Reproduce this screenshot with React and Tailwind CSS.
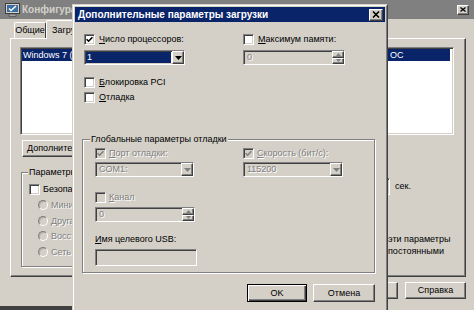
import React from "react";

const sunken =
  "border border-t-[#808080] border-l-[#808080] border-r-white border-b-white shadow-[inset_1px_1px_0_#404040,inset_-1px_-1px_0_#d4d0c8]";
const raised =
  "border border-t-white border-l-white border-r-[#404040] border-b-[#404040] shadow-[inset_-1px_-1px_0_#808080] bg-[#d4d0c8]";
const dis = "text-[#808080] [text-shadow:1px_1px_0_#fff]";

function Check({ checked, disabled }) {
  return (
    <div
      className={`w-[11px] h-[11px] shrink-0 flex items-center justify-center ${sunken} ${
        disabled ? "bg-[#d4d0c8]" : "bg-white"
      }`}
    >
      {checked && (
        <svg width="7" height="7" viewBox="0 0 7 7">
          <path
            d="M0.6 3.2 L2.6 5.2 L6.4 1.2"
            stroke={disabled ? "#808080" : "#000"}
            strokeWidth="1.6"
            fill="none"
          />
        </svg>
      )}
    </div>
  );
}

function Radio() {
  return (
    <div className="w-[10px] h-[10px] shrink-0 rounded-full border border-t-[#808080] border-l-[#808080] border-r-white border-b-white bg-[#d4d0c8] shadow-[inset_1px_1px_0_#b0aca4]" />
  );
}

function Arrow({ disabled }) {
  return (
    <div className={`w-[12px] h-full shrink-0 flex items-center justify-center ${raised}`}>
      <svg width="7" height="4" viewBox="0 0 7 4">
        <polygon points="0,0 7,0 3.5,4" fill={disabled ? "#808080" : "#000"} />
      </svg>
    </div>
  );
}

function Spin() {
  return (
    <div className="w-[12px] h-full shrink-0 flex flex-col">
      <div className={`flex-1 flex items-center justify-center ${raised}`}>
        <svg width="5" height="3" viewBox="0 0 5 3">
          <polygon points="2.5,0 5,3 0,3" fill="#808080" />
        </svg>
      </div>
      <div className={`flex-1 flex items-center justify-center ${raised}`}>
        <svg width="5" height="3" viewBox="0 0 5 3">
          <polygon points="0,0 5,0 2.5,3" fill="#808080" />
        </svg>
      </div>
    </div>
  );
}

function CloseGlyph() {
  return (
    <svg width="8" height="7" viewBox="0 0 8 7">
      <path d="M1 0.5 L7 6.5 M7 0.5 L1 6.5" stroke="#000" strokeWidth="1.6" fill="none" />
    </svg>
  );
}

export default function App() {
  return (
    <div className="relative w-[474px] h-[310px] overflow-hidden bg-[#d4d0c8] font-['Liberation_Sans',Arial,sans-serif] text-[9px] leading-[11px] text-black">
      {/* Background window: Конфигурация системы */}
      <div className="absolute left-0 top-0 z-0 w-[474px] h-[310px] bg-[#d4d0c8] flex flex-col">
        <div className="h-[19px] shrink-0 bg-[#808080] flex items-center pl-[5px] pr-[5px]">
          <svg width="15" height="14" viewBox="0 0 15 14">
            <rect x="0.5" y="0.5" width="14" height="10" fill="#d4d0c8" stroke="#404040" />
            <rect x="2" y="2" width="11" height="7" fill="#3a6ea5" />
            <path d="M4 5.5 L6 7.5 L11 3" stroke="#fff" strokeWidth="1.4" fill="none" />
            <rect x="4" y="11" width="7" height="2.5" fill="#a0a0a0" stroke="#404040" strokeWidth="0.6" />
          </svg>
          <span className="ml-[2px] font-bold text-[10px] text-[#d4d0c8]">Конфигурация системы</span>
          <div className={`ml-auto w-[12px] h-[10px] flex items-center justify-center ${raised}`}>
            <svg width="6" height="5" viewBox="0 0 6 5">
              <path d="M0.5 0.5 L5.5 4.5 M5.5 0.5 L0.5 4.5" stroke="#000" strokeWidth="1.3" fill="none" />
            </svg>
          </div>
        </div>

        {/* tabs */}
        <div className="h-[19px] shrink-0 flex items-end pl-[14px]">
          <div className="w-[32px] h-[16px] border border-b-0 border-t-white border-l-white border-r-[#404040] rounded-t-[2px] flex items-center justify-center">
            Общие
          </div>
          <div className="relative -mb-px w-[62px] h-[19px] border border-b-0 border-t-white border-l-white border-r-[#404040] rounded-t-[2px] bg-[#d4d0c8] flex items-center pl-[5px]">
            Загрузка
          </div>
        </div>

        {/* tab panel */}
        <div className="ml-[10px] w-[456px] h-[239px] shrink-0 border border-t-white border-l-white border-r-[#404040] border-b-[#404040] shadow-[inset_-1px_-1px_0_#808080] flex flex-col pl-[9px] pt-[8px]">
          <div className={`w-[434px] h-[88px] bg-white pt-px pl-px ${sunken}`}>
            <div className="h-[12px] w-[428px] bg-[#0a246a] text-white flex items-center pl-px whitespace-nowrap">
              <span className="w-[367px] overflow-hidden">Windows 7 (C:\Windows) : Текущая ОС; Загружаемая по умолчанию</span>
              <span>ОС</span>
            </div>
          </div>

          <div className={`mt-[5px] ml-[2px] w-[150px] h-[17px] flex items-center pl-[4px] ${raised}`}>
            Дополнительные параметры...
          </div>

          <div className="mt-[15px] flex">
            {/* Параметры загрузки group */}
            <div className="relative ml-[1px] w-[320px] h-[95px] border border-[#808080] shadow-[inset_1px_1px_0_#fff,1px_1px_0_#fff] flex flex-col pl-[7px] pt-[11px]">
              <span className="absolute left-[6px] top-[-6px] px-px bg-[#d4d0c8]">Параметры загрузки</span>
              <div className="flex items-center gap-[3px] h-[11px]">
                <Check />
                <span>Безопасный режим</span>
              </div>
              <div className="mt-[5px] ml-[9px] flex items-center gap-[3px] h-[10px]">
                <Radio />
                <span className={dis}>Минимальная</span>
              </div>
              <div className="mt-[6px] ml-[9px] flex items-center gap-[3px] h-[10px]">
                <Radio />
                <span className={dis}>Другая оболочка</span>
              </div>
              <div className="mt-[5px] ml-[9px] flex items-center gap-[3px] h-[10px]">
                <Radio />
                <span className={dis}>Восстановление Active Directory</span>
              </div>
              <div className="mt-[6px] ml-[9px] flex items-center gap-[3px] h-[10px]">
                <Radio />
                <span className={dis}>Сеть</span>
              </div>
            </div>

            {/* right column */}
            <div className="ml-[9px] flex flex-col pt-[6px]">
              <div className="flex items-center h-[17px]">
                <div className={`w-[40px] h-[17px] bg-white ${sunken}`} />
                <span className="ml-[5px]">сек.</span>
              </div>
              <div className="mt-[38px] ml-[38px] flex flex-col leading-[12px]">
                <span>эти параметры</span>
                <span>постоянными</span>
              </div>
            </div>
          </div>
        </div>

        {/* bottom buttons */}
        <div className="mt-[5px] flex justify-end pr-[8px] gap-[7px]">
          <div className={`w-[68px] h-[17px] flex items-center justify-center ${raised}`}>
            <span className={dis}>Применить</span>
          </div>
          <div className={`w-[61px] h-[17px] flex items-center justify-center ${raised}`}>
            Справка
          </div>
        </div>
        <div className="mt-auto w-[72px] h-[4px] bg-[#404040]" />
      </div>

      {/* Front dialog */}
      <div className="absolute left-[72px] top-[4px] z-20 w-[316px] h-[320px] bg-[#d4d0c8] border border-t-[#d4d0c8] border-l-[#d4d0c8] border-r-[#404040] border-b-[#404040]">
        <div className="h-full border border-t-white border-l-white border-r-[#808080] border-b-[#808080] p-px flex flex-col">
          <div className="h-[15px] shrink-0 bg-[#0a246a] flex items-center pl-[3px] pr-[2px]">
            <span className="text-white font-bold text-[10px]">Дополнительные параметры загрузки</span>
            <div className={`ml-auto w-[14px] h-[12px] flex items-center justify-center ${raised}`}>
              <CloseGlyph />
            </div>
          </div>

          <div className="flex flex-col pl-[7px] pt-[12px]">
            {/* row A */}
            <div className="ml-[2px] flex items-center h-[11px]">
              <div className="w-[159px] flex items-center gap-[4px]">
                <Check checked />
                <span>
                  <u>Ч</u>исло процессоров:
                </span>
              </div>
              <div className="flex items-center gap-[4px]">
                <Check />
                <span>
                  <u>М</u>аксимум памяти:
                </span>
              </div>
            </div>

            {/* row B */}
            <div className="ml-[2px] mt-[5px] flex h-[15px]">
              <div className={`w-[101px] h-[15px] bg-white flex ${sunken}`}>
                <div className="flex-1 m-px bg-[#0a246a] text-white flex items-center pl-[1px] leading-[9px]">1</div>
                <Arrow />
              </div>
              <div className={`ml-[58px] w-[102px] h-[15px] bg-[#d4d0c8] flex ${sunken}`}>
                <div className={`flex-1 flex items-center pl-[3px] leading-[11px] ${dis}`}>0</div>
                <Spin />
              </div>
            </div>

            {/* row C */}
            <div className="ml-[2px] mt-[12px] flex items-center gap-[4px] h-[11px]">
              <Check />
              <span>
                <u>Б</u>локировка PCI
              </span>
            </div>
            {/* row D */}
            <div className="ml-[2px] mt-[4px] flex items-center gap-[4px] h-[11px]">
              <Check />
              <span>
                <u>О</u>тладка
              </span>
            </div>

            {/* Global debug group */}
            <div className="relative mt-[36px] w-[293px] h-[134px] border border-[#808080] shadow-[inset_1px_1px_0_#fff,1px_1px_0_#fff] flex flex-col pl-[12px] pt-[8px]">
              <span className="absolute left-[7px] top-[-6px] px-px bg-[#d4d0c8]">Глобальные параметры отладки</span>

              <div className="flex items-center h-[11px]">
                <div className="w-[148px] flex items-center gap-[3px]">
                  <Check checked disabled />
                  <span className={dis}>
                    <u>П</u>орт отладки:
                  </span>
                </div>
                <div className="flex items-center gap-[3px]">
                  <Check checked disabled />
                  <span className={dis}>
                    <u>С</u>корость (бит/с):
                  </span>
                </div>
              </div>

              <div className="mt-[3px] flex h-[15px]">
                <div className={`w-[99px] h-[15px] bg-[#d4d0c8] flex ${sunken}`}>
                  <div className={`flex-1 flex items-center pl-[3px] leading-[11px] ${dis}`}>COM1:</div>
                  <Arrow disabled />
                </div>
                <div className={`ml-[49px] w-[100px] h-[15px] bg-[#d4d0c8] flex ${sunken}`}>
                  <div className={`flex-1 flex items-center pl-[3px] leading-[11px] ${dis}`}>115200</div>
                  <Arrow disabled />
                </div>
              </div>

              <div className="mt-[15px] flex items-center gap-[3px] h-[11px]">
                <Check disabled />
                <span className={dis}>
                  <u>К</u>анал
                </span>
              </div>

              <div className={`mt-[4px] w-[100px] h-[15px] bg-[#d4d0c8] flex ${sunken}`}>
                <div className={`flex-1 flex items-center pl-[3px] leading-[11px] ${dis}`}>0</div>
                <Spin />
              </div>

              <div className="mt-[11px] h-[12px] flex items-center">
                <span>
                  <u>И</u>мя целевого USB:
                </span>
              </div>

              <div className={`mt-[4px] w-[102px] h-[17px] bg-[#d4d0c8] ${sunken}`} />
            </div>

            {/* buttons */}
            <div className="mt-[11px] w-[293px] flex justify-end gap-[6px]">
              <div className="w-[60px] h-[18px] border border-black bg-[#d4d0c8] shadow-[inset_1px_1px_0_#fff,inset_-1px_-1px_0_#404040,inset_-2px_-2px_0_#808080] flex items-center justify-center">
                OK
              </div>
              <div className={`w-[62px] h-[18px] flex items-center justify-center ${raised}`}>Отмена</div>
            </div>
          </div>
        </div>
      </div>
    </div>
  );
}
